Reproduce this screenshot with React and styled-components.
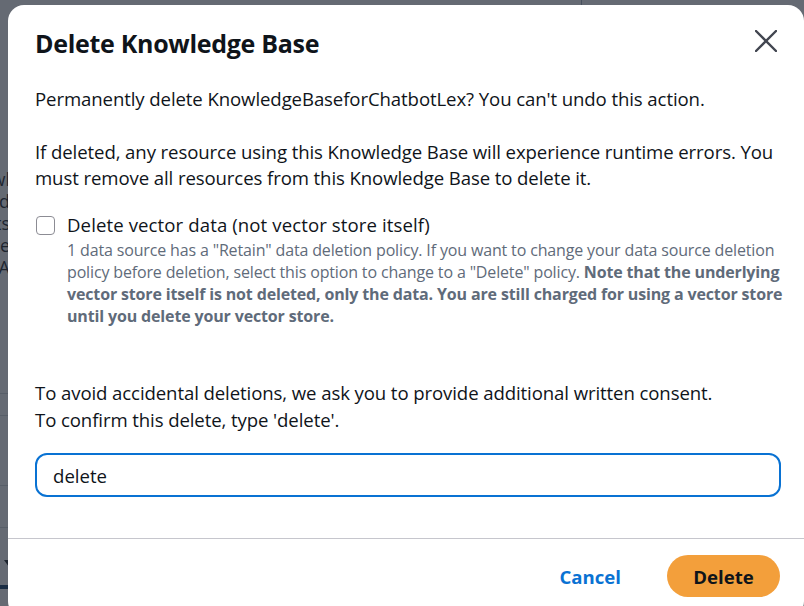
import React, { useState } from 'react'
import styled, { createGlobalStyle } from 'styled-components'

const GlobalStyle = createGlobalStyle`
	* {
		box-sizing: border-box;
	}

	body {
		margin: 0;
		font-family: "Open Sans", "Noto Sans", sans-serif;
		color: #0f141a;
		background: #ffffff;
	}
`

const Page = styled.div`
	position: relative;
	width: 804px;
	height: 606px;
	overflow: hidden;
	background: #ffffff;
`

// background console page, only its edges show through
const Backdrop = styled.div`
	display: flex;
	height: 100%;
`

const SideColumn = styled.div`
	width: 10px;
	padding-top: 168px;
	display: flex;
	flex-direction: column;
`

const SideItem = styled.div`
	height: 22px;
	display: flex;
	justify-content: flex-end;
	overflow: hidden;
	white-space: nowrap;
	font-size: 18px;
	line-height: 22px;
	color: #0f141a;
`

const SideRule = styled.div`
	height: 1px;
	background: #d1d5db;
	margin-top: ${props => props.gap}px;
`

const SideCaret = styled.div`
	margin-top: 32px;
	margin-left: 4px;
	width: 0;
	height: 0;
	border-left: 5px solid transparent;
	border-right: 5px solid transparent;
	border-top: 7px solid #0f141a;
`

const SideBar = styled.div`
	margin-top: 18px;
	height: 4px;
	background: #033160;
`

const TopStrip = styled.div`
	flex: 1;
	height: 6px;
	display: flex;
	padding-left: 571px;
`

const TopLine = styled.div`
	width: 1px;
	height: 6px;
	background: #9ba7b6;
`

const Overlay = styled.div`
	position: absolute;
	inset: 0;
	background: rgba(35, 43, 55, 0.7);
`

const Modal = styled.div`
	position: absolute;
	left: 8px;
	top: 5px;
	width: 796px;
	height: 612px;
	background: #ffffff;
	border-radius: 16px;
	display: flex;
	flex-direction: column;
`

const Header = styled.div`
	display: flex;
	align-items: flex-start;
	justify-content: space-between;
	padding: 22px 27px 0 27px;
`

const Title = styled.h2`
	margin: 0;
	font-size: 25px;
	line-height: 32px;
	letter-spacing: -0.3px;
	font-weight: 700;
	color: #0f141a;
`

const CloseButton = styled.button`
	border: none;
	background: none;
	padding: 0;
	margin-top: 3px;
	width: 22px;
	height: 22px;
	display: flex;
	cursor: pointer;
	color: #424650;
`

const Body = styled.div`
	padding: 27px 23px 0 27px;
	display: flex;
	flex-direction: column;
`

const Paragraph = styled.p`
	margin: 0 0 ${props => props.after || 0}px 0;
	font-size: 18.6px;
	line-height: 26.7px;
	letter-spacing: -0.1px;
	color: #0f141a;
`

const CheckRow = styled.label`
	display: flex;
	align-items: flex-start;
	gap: 12px;
	margin-bottom: 53px;
	padding-left: 1px;
`

const Box = styled.span`
	flex: none;
	width: 19px;
	height: 19px;
	margin-top: 4px;
	border: 1.5px solid #8c8c94;
	border-radius: 4px;
	background: ${props => (props.checked ? '#0972d3' : '#ffffff')};
`

const CheckText = styled.div`
	display: flex;
	flex-direction: column;
	margin-right: -16px;
`

const CheckLabel = styled.span`
	font-size: 18.6px;
	line-height: 26.7px;
	letter-spacing: 0.1px;
	color: #0f141a;
`

const CheckHint = styled.span`
	font-size: 16px;
	line-height: 22px;
	letter-spacing: -0.15px;
	white-space: nowrap;
	color: #5f6b7a;

	strong {
		font-weight: 700;
	}
`

const Input = styled.input`
	margin-top: 20px;
	height: 44px;
	width: 100%;
	border: 2px solid #0972d3;
	border-radius: 12px;
	padding: 0 16px;
	font-family: inherit;
	font-size: 18.6px;
	color: #0f141a;
	outline: none;
	caret-color: #0f141a;
`

const Divider = styled.div`
	height: 1px;
	background: #c6c6cd;
	margin-top: 41px;
`

const Footer = styled.div`
	display: flex;
	justify-content: flex-end;
	align-items: center;
	gap: 46px;
	padding: 16px 24px 0 27px;
`

const LinkButton = styled.button`
	border: none;
	background: none;
	padding: 0;
	font-family: inherit;
	font-size: 18.6px;
	font-weight: 700;
	color: #0972d3;
	cursor: pointer;
`

const PrimaryButton = styled.button`
	border: none;
	height: 42px;
	width: 113px;
	border-radius: 21px;
	background: #f39f3b;
	font-family: inherit;
	font-size: 18.6px;
	font-weight: 700;
	color: #0f141a;
	cursor: pointer;
`

const sideWords = ['Knowl', 'ecord', 'ests', 'edge', 'A']

export default function App() {
	const [checked, setChecked] = useState(false)
	const [value, setValue] = useState('delete')

	return (
		<Page>
			<GlobalStyle />
			<Backdrop>
				<SideColumn>
					{sideWords.map(w => (
						<SideItem key={w}>{w}</SideItem>
					))}
					<SideRule gap={115} />
					<SideRule gap={21} />
					<SideRule gap={69} />
					<SideRule gap={41} />
					<SideCaret />
					<SideBar />
				</SideColumn>
				<TopStrip>
					<TopLine />
				</TopStrip>
			</Backdrop>
			<Overlay />
			<Modal>
				<Header>
					<Title>Delete Knowledge Base</Title>
					<CloseButton aria-label="Close">
						<svg width="22" height="22" viewBox="0 0 22 22" fill="none">
							<path d="M1 1 L21 21 M21 1 L1 21" stroke="currentColor" strokeWidth="2.4" strokeLinecap="round" />
						</svg>
					</CloseButton>
				</Header>
				<Body>
					<Paragraph after={26}>
						Permanently delete KnowledgeBaseforChatbotLex? You can't undo this action.
					</Paragraph>
					<Paragraph after={20}>
						If deleted, any resource using this Knowledge Base will experience runtime errors. You
						<br />
						must remove all resources from this Knowledge Base to delete it.
					</Paragraph>
					<CheckRow onClick={() => setChecked(!checked)}>
						<Box checked={checked} />
						<CheckText>
							<CheckLabel>Delete vector data (not vector store itself)</CheckLabel>
							<CheckHint>
								1 data source has a "Retain" data deletion policy. If you want to change your data source deletion
								<br />
								policy before deletion, select this option to change to a "Delete" policy.{' '}
								<strong>
									Note that the underlying
									<br />
									vector store itself is not deleted, only the data. You are still charged for using a vector store
									<br />
									until you delete your vector store.
								</strong>
							</CheckHint>
						</CheckText>
					</CheckRow>
					<Paragraph>
						To avoid accidental deletions, we ask you to provide additional written consent.
						<br />
						To confirm this delete, type 'delete'.
					</Paragraph>
					<Input value={value} onChange={e => setValue(e.target.value)} autoFocus />
				</Body>
				<Divider />
				<Footer>
					<LinkButton>Cancel</LinkButton>
					<PrimaryButton>Delete</PrimaryButton>
				</Footer>
			</Modal>
		</Page>
	)
}
